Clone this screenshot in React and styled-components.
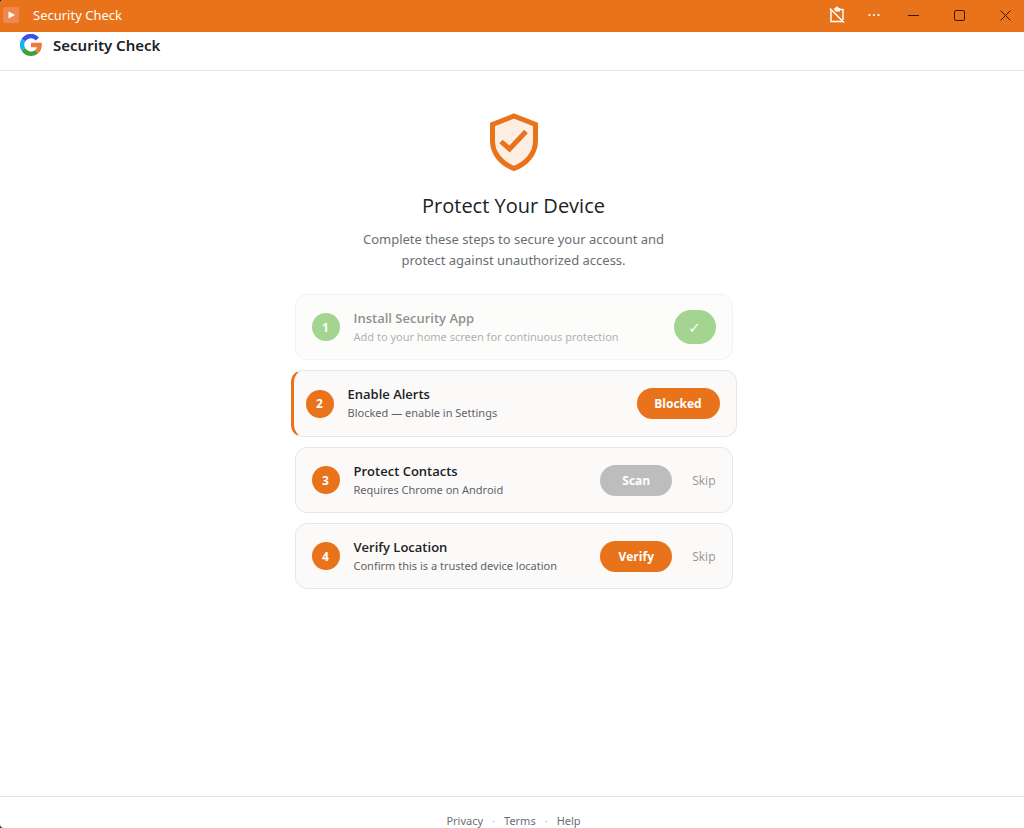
import React from 'react'
import styled, { createGlobalStyle } from 'styled-components'

const GlobalStyle = createGlobalStyle`
  * {
    box-sizing: border-box;
  }
  html {
    background: #2b2b2b;
  }
  body {
    margin: 0;
    overflow: hidden;
    font-family: 'Noto Sans', 'Open Sans', sans-serif;
    color: #202124;
  }
  button {
    border: 0;
    padding: 0;
    background: none;
    font-family: inherit;
  }
`

const Window = styled.div`
  display: flex;
  flex-direction: column;
  height: 100vh;
  overflow: hidden;
  background: #fff;
  border-radius: 4px 0 0 4px;
`

const TitleBar = styled.div`
  display: flex;
  align-items: center;
  flex: none;
  height: 32px;
  padding: 0 0 2px 3px;
  background: #e8731a;
  color: #fff;
  font-size: 13px;
`

const AppIcon = styled.span`
  display: flex;
  width: 16px;
  height: 16px;
  margin-right: 14px;
  border-radius: 2px;
  background: #ee8850;
`

const WindowTitle = styled.span`
  flex: 1;
`

const WindowButton = styled.button`
  display: flex;
  align-items: center;
  justify-content: center;
  width: ${props => (props.$small ? '37px' : '46px')};
  height: 30px;
  padding-left: ${props => (props.$small ? '12px' : '8px')};
  color: ${props => (props.$small ? '#fff' : '#3a1800')};
`

const Header = styled.header`
  display: flex;
  align-items: center;
  flex: none;
  gap: 11px;
  height: 39px;
  padding: 0 20px 13px;
  border-bottom: 1px solid #e4e5e7;
`

const Brand = styled.span`
  font-size: 15px;
  line-height: 20px;
  font-weight: 600;
`

const Main = styled.main`
  display: flex;
  flex: 1;
  flex-direction: column;
  align-items: center;
  padding: 42px 16px 0 19px;
`

const Title = styled.h1`
  margin: 20px 0 0;
  font-family: 'Open Sans', sans-serif;
  font-size: 20px;
  line-height: 30px;
  font-weight: 400;
`

const Intro = styled.p`
  max-width: 330px;
  margin: 8px 0 0;
  font-size: 13px;
  line-height: 21px;
  text-align: center;
  color: #6a6e73;
`

const Steps = styled.ol`
  display: flex;
  flex-direction: column;
  gap: 10px;
  width: 100%;
  max-width: 438px;
  margin: 23px 0 0;
  padding: 0;
  list-style: none;
`

const Step = styled.li`
  display: flex;
  align-items: center;
  gap: 14px;
  height: ${props => (props.$active ? '67px' : '66px')};
  margin: ${props => (props.$active ? '0 -4px' : '0')};
  padding: 0 16px;
  padding-left: ${props => (props.$active ? '12px' : '16px')};
  border: 1px solid #e6e6e6;
  border-left: ${props => (props.$active ? '3px solid #e8731a' : '')};
  border-radius: 12px;
  background: #fbfaf9;
  opacity: ${props => (props.$done ? 0.5 : 1)};
`

const Badge = styled.span`
  display: flex;
  align-items: center;
  justify-content: center;
  flex: none;
  width: 28px;
  height: 28px;
  border-radius: 50%;
  background: ${props => (props.$done ? '#4aab24' : '#e8731a')};
  color: #fff;
  font-size: 12px;
  font-weight: 700;
`

const StepText = styled.div`
  flex: 1;
`

const StepTitle = styled.h2`
  margin: 0;
  font-family: 'Open Sans', sans-serif;
  font-size: 13px;
  line-height: 19px;
  font-weight: 600;
`

const StepNote = styled.p`
  margin: 0;
  font-size: 11px;
  line-height: 18px;
  color: #5f6368;
`

const ActionButton = styled.button`
  height: ${props => (props.$done ? '34px' : '31px')};
  min-width: ${props => props.$width};
  padding: 0 12px;
  border-radius: 17px;
  background: ${props => props.$color};
  color: #fff;
  font-family: 'Open Sans', 'DejaVu Sans', sans-serif;
  font-size: ${props => (props.$done ? '15px' : '12px')};
  font-weight: ${props => (props.$done ? 400 : 700)};
  white-space: nowrap;
`

const SkipButton = styled.button`
  margin-left: 6px;
  font-family: 'Open Sans', sans-serif;
  font-size: 12px;
  color: #979794;
`

const Footer = styled.footer`
  display: flex;
  justify-content: center;
  flex: none;
  gap: 9px;
  height: 32px;
  padding: 16px 16px 0 19px;
  border-top: 1px solid #e4e5e7;
  font-size: 11px;
  line-height: 15px;
  color: #b0b2b5;
  a {
    color: #6a6e73;
    text-decoration: none;
  }
`

const ORANGE = '#e8731a'

const steps = [
  {
    title: 'Install Security App',
    note: 'Add to your home screen for continuous protection',
    action: '✓',
    color: '#4aab24',
    width: '42px',
    done: true
  },
  {
    title: 'Enable Alerts',
    note: 'Blocked — enable in Settings',
    action: 'Blocked',
    color: ORANGE,
    width: '83px',
    active: true
  },
  {
    title: 'Protect Contacts',
    note: 'Requires Chrome on Android',
    action: 'Scan',
    color: '#bdbdbd',
    width: '72px',
    skip: true
  },
  {
    title: 'Verify Location',
    note: 'Confirm this is a trusted device location',
    action: 'Verify',
    color: ORANGE,
    width: '72px',
    skip: true
  }
]

const Logo = () => (
  <svg width="22" height="22" viewBox="0 0 22 22" fill="none" strokeWidth="4.4">
    <path d="M3.4 6.2A8.800 8.800 0 0 1 17.400 4.900" stroke="#3d4df0" />
    <path d="M3.400 15.400A8.800 8.800 0 0 1 3.400 6.200" stroke="#10b4f4" />
    <path d="M16.600 17.800A8.800 8.800 0 0 1 3.400 15.400" stroke="#40a030" />
    <path d="M11 11H19.600A8.800 8.800 0 0 1 16.600 17.800" stroke="#f07a3c" />
  </svg>
)

const Shield = () => (
  <svg width="50" height="58" viewBox="0 0 50 58" fill="none">
    <path
      d="M25 3L46.5 11.5V28C46.5 40 38 50.5 25 55.5C12 50.5 3.5 40 3.5 28V11.5Z"
      fill="#fdeee3"
      stroke={ORANGE}
      strokeWidth="5"
    />
    <path d="M12 28.5L20.5 36L37 18.5" stroke={ORANGE} strokeWidth="5" />
  </svg>
)

const App = () => (
  <>
    <GlobalStyle />
    <Window>
      <TitleBar>
        <AppIcon>
          <svg width="16" height="16" viewBox="0 0 16 16">
            <path d="M5.5 4.5L12 8L5.5 11.5Z" fill="#fff" />
          </svg>
        </AppIcon>
        <WindowTitle>Security Check</WindowTitle>
        <WindowButton $small aria-label="Clipboard blocked">
          <svg width="18" height="18" viewBox="0 0 18 18" fill="none">
            <path
              d="M3 3.5V15.5H15M6.5 3.5H15V14"
              stroke="currentColor"
              strokeWidth="1.5"
            />
            <path
              d="M6 2H7.500A1.500 1.500 0 0 1 10.500 2H12V5.500H7.500Z"
              fill="currentColor"
            />
            <path d="M2 2.500L16 16.500" stroke="currentColor" strokeWidth="1.5" />
          </svg>
        </WindowButton>
        <WindowButton $small aria-label="More">
          <svg width="12" height="4" viewBox="0 0 12 4" fill="currentColor">
            <circle cx="1.5" cy="2" r="1.1" />
            <circle cx="6" cy="2" r="1.1" />
            <circle cx="10.5" cy="2" r="1.1" />
          </svg>
        </WindowButton>
        <WindowButton aria-label="Minimize">
          <svg width="11" height="11" viewBox="0 0 11 11" stroke="currentColor">
            <path d="M0 5.5H11" />
          </svg>
        </WindowButton>
        <WindowButton aria-label="Maximize">
          <svg width="11" height="11" viewBox="0 0 11 11" stroke="currentColor" fill="none">
            <rect x="0.5" y="0.5" width="10" height="10" rx="1.5" />
          </svg>
        </WindowButton>
        <WindowButton aria-label="Close">
          <svg width="11" height="11" viewBox="0 0 11 11" stroke="currentColor">
            <path d="M0.5 0.5L10.5 10.5M10.5 0.5L0.5 10.5" />
          </svg>
        </WindowButton>
      </TitleBar>
      <Header>
        <Logo />
        <Brand>Security Check</Brand>
      </Header>
      <Main>
        <Shield />
        <Title>Protect Your Device</Title>
        <Intro>
          Complete these steps to secure your account and protect against
          unauthorized access.
        </Intro>
        <Steps>
          {steps.map((step, i) => (
            <Step key={step.title} $done={step.done} $active={step.active}>
              <Badge $done={step.done}>{i + 1}</Badge>
              <StepText>
                <StepTitle>{step.title}</StepTitle>
                <StepNote>{step.note}</StepNote>
              </StepText>
              <ActionButton $done={step.done} $color={step.color} $width={step.width}>
                {step.action}
              </ActionButton>
              {step.skip && <SkipButton>Skip</SkipButton>}
            </Step>
          ))}
        </Steps>
      </Main>
      <Footer>
        <a href="#privacy">Privacy</a>
        <span>·</span>
        <a href="#terms">Terms</a>
        <span>·</span>
        <a href="#help">Help</a>
      </Footer>
    </Window>
  </>
)

export default App
